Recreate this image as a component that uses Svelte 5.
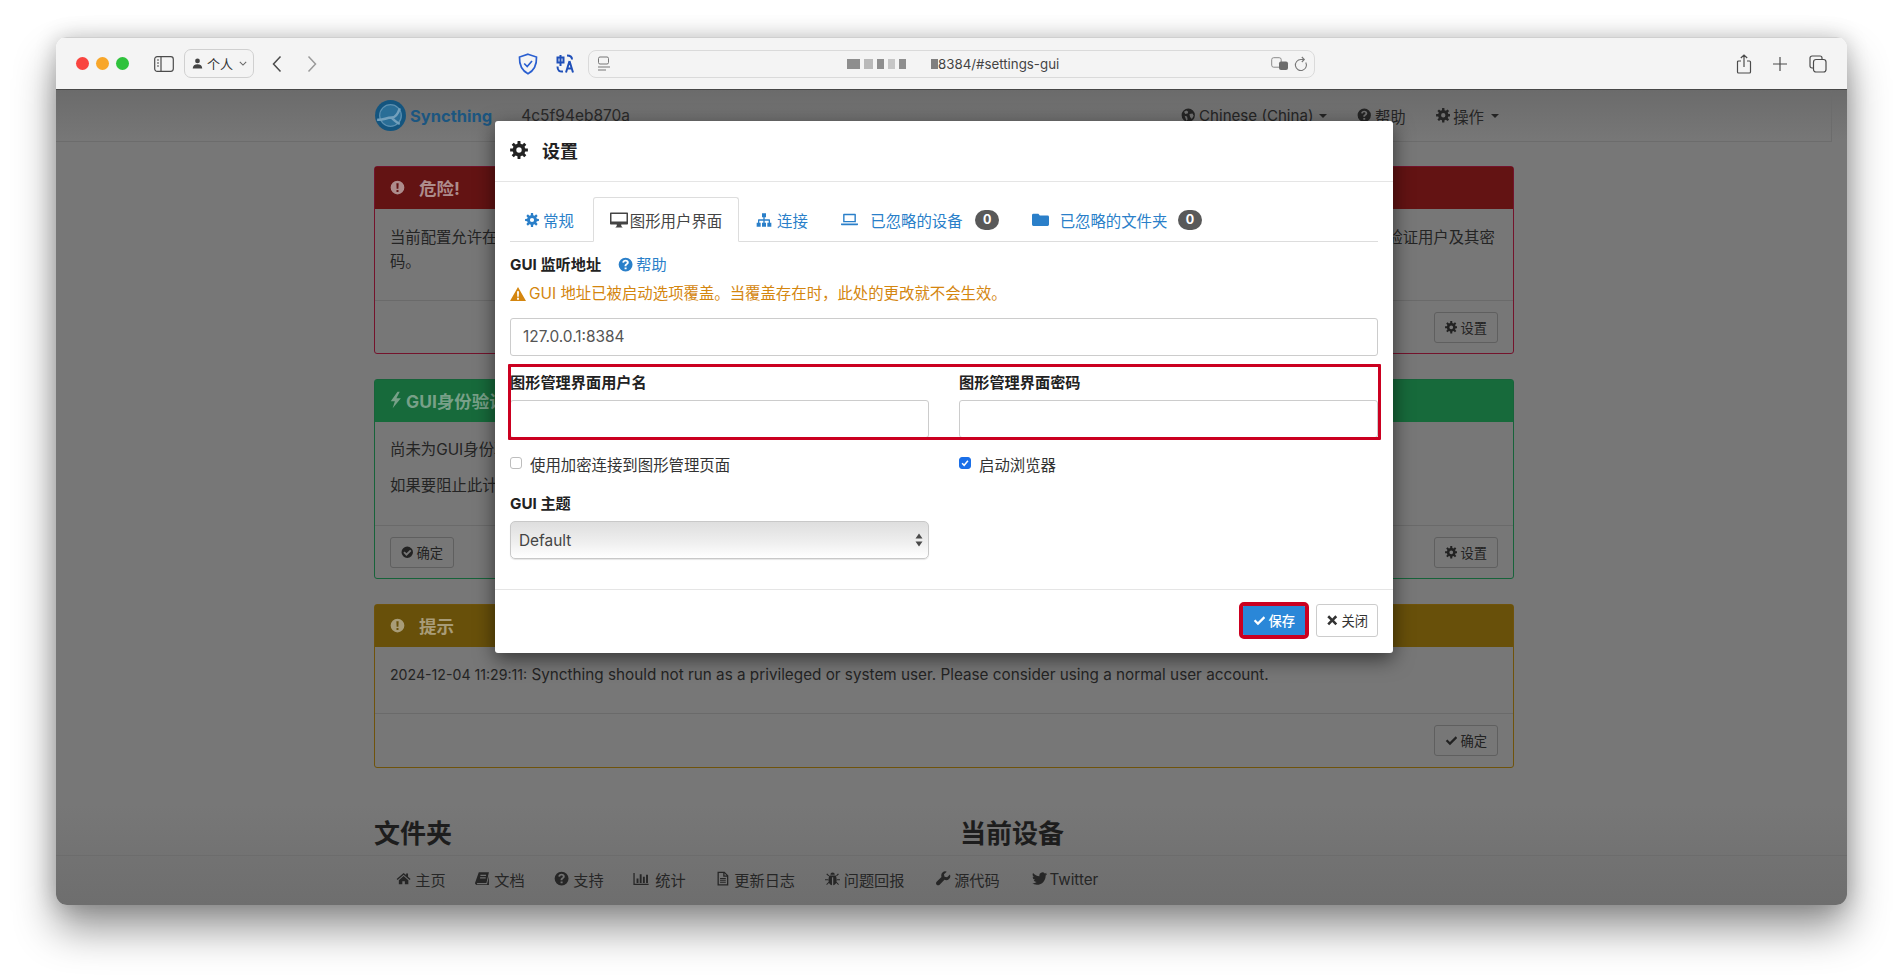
<script>
  function gear(teeth = 8, R = 12, r = 8.6, hole = 3.6) {
    const pts = [];
    const step = (Math.PI * 2) / teeth;
    for (let i = 0; i < teeth; i++) {
      const a = i * step - Math.PI / 2;
      const w = step * 0.2;
      const v = step * 0.31;
      const p = (rad, ang) => `${(12 + rad * Math.cos(ang)).toFixed(2)} ${(12 + rad * Math.sin(ang)).toFixed(2)}`;
      pts.push(p(r, a - v), p(R, a - w), p(R, a + w), p(r, a + v));
    }
    return `M${pts.join('L')}zM${12 - hole} 12a${hole} ${hole} 0 1 0 ${hole * 2} 0a${hole} ${hole} 0 1 0 ${-hole * 2} 0z`;
  }

  const icons = {
    cog: gear(),
    check: 'M20.5 4.5 9.5 15.5 4.5 10.5 1.5 13.5 9.5 21.5 23.5 7.5z',
    times: 'M6 2.5 12 8.5 18 2.5 21.5 6 15.5 12 21.5 18 18 21.5 12 15.5 6 21.5 2.5 18 8.5 12 2.5 6z',
    desktop: 'M1 2h22a1 1 0 0 1 1 1v14a1 1 0 0 1-1 1h-8v2l2 2H7l2-2v-2H1a1 1 0 0 1-1-1V3a1 1 0 0 1 1-1zM2 4v10h20V4z',
    sitemap: 'M9 2h6v6h-2v3h7a1 1 0 0 1 1 1v4h2v6h-6v-6h2v-3h-6v3h2v6H9v-6h2v-3H5v3h2v6H1v-6h2v-4a1 1 0 0 1 1-1h7V8H9z',
    laptop: 'M4 4h16a1 1 0 0 1 1 1v11H3V5a1 1 0 0 1 1-1zM5 6v8h14V6zM0 17.5h24V19a1 1 0 0 1-1 1H1a1 1 0 0 1-1-1z',
    folder: 'M2 4h7l2 2.5h11a2 2 0 0 1 2 2V19a2 2 0 0 1-2 2H2a2 2 0 0 1-2-2V6a2 2 0 0 1 2-2z',
    warn: 'M12 1.5 24 22.5H0zM10.5 8l.4 8h2.2l.4-8zM10.6 17.5v3h2.8v-3z',
    excl: 'M12 1a11 11 0 1 0 0 22 11 11 0 0 0 0-22zM10.2 5h3.6l-.4 9h-2.8zM10.4 16h3.2v3.2h-3.2z',
    question: 'M12 1a11 11 0 1 0 0 22A11 11 0 0 0 12 1zM10.4 16.5h3.2v3h-3.2zM12 4.5c-3 0-4.8 1.6-5.2 4l2.8.7c.3-1.3 1-2 2.3-2 1.2 0 2 .6 2 1.5 0 .8-.5 1.3-1.6 2-1.4.9-1.9 1.8-1.9 3.3v.5h3v-.3c0-.8.3-1.2 1.3-1.9 1.5-1 2.3-2 2.3-3.7 0-2.4-2-4.1-5-4.1z',
    checkc: 'M12 1a11 11 0 1 0 0 22 11 11 0 0 0 0-22zM17.5 7 10.5 14l-3.5-3.5-2.5 2.5 6 6 9.5-9.5z',
    bolt: 'M14 1 5 13.5h5.5L7.5 23l11-13.5h-6L17 1z',
    globe: 'M12 1a11 11 0 1 0 0 22 11 11 0 0 0 0-22zM5 6l4-2 3 2-1 3-4 1zM14 10l5-1 2 4-3 5-3-3zM6 13l4 1 1 5-2 2z',
    home: 'M12 3 1 12.5l1.5 1.6L12 6l9.5 8.1 1.5-1.6L19 9V4h-3v2.4zM12 8l-7.5 6.5V21H10v-5h4v5h5.5v-6.5z',
    book: 'M6 2h16l-4 17H4c-.8 0-1 .6-1 1s.4 1 1 1h15l3-13v14H3c-1.7 0-3-1.3-3-3zM8.5 6v2h9V6zM8 10v2h9v-2z',
    bars: 'M0 3h2v17h22v2H0zM5 12h3v7H5zM10 5h3v14h-3zM15 9h3v10h-3zM20 6h3v13h-3z',
    file: 'M4 1h11l6 6v16H4zM6 3v18h13V9h-6V3zM15 3.5V7h3.5zM8 11h9v1.5H8zM8 14h9v1.5H8zM8 17h9v1.5H8z',
    bug: 'M8.5 6a3.5 3.5 0 0 1 7 0zM7 7h10c1 2 1.5 5 1.5 8 0 4-2.5 7-5.5 7.5V10h-2v12.5C8 22 5.5 19 5.5 15c0-3 .5-6 1.5-8zM2 5l1.5-1 3 3-1 1.2zM22 5l-1.5-1-3 3 1 1.2zM0 13h5v1.6H0zM24 13h-5v1.6h5zM2 21l3.5-3.5 1 1.2-3.5 3.3zM22 21l-3.5-3.5-1 1.2 3.5 3.3z',
    wrench: 'M22 5.5l-4.5 4.5-4-1-1-4L17 1a6.5 6.5 0 0 0-8.3 8.3L1 17c-1.3 1.3-1.3 3.3 0 4.7s3.4 1.3 4.7 0l7.7-7.7A6.5 6.5 0 0 0 22 5.5z',
    twitter: 'M23.953 4.57a10 10 0 01-2.825.775 4.958 4.958 0 002.163-2.723c-.951.555-2.005.959-3.127 1.184a4.92 4.92 0 00-8.384 4.482C7.69 8.095 4.067 6.13 1.64 3.162a4.822 4.822 0 00-.666 2.475c0 1.71.87 3.213 2.188 4.096a4.904 4.904 0 01-2.228-.616v.06a4.923 4.923 0 003.946 4.827 4.996 4.996 0 01-2.212.085 4.936 4.936 0 004.604 3.417 9.867 9.867 0 01-6.102 2.105c-.39 0-.779-.023-1.17-.067a13.995 13.995 0 007.557 2.209c9.053 0 13.998-7.496 13.998-13.985 0-.21 0-.42-.015-.63A9.935 9.935 0 0024 4.59z'
  };

  const footerLinks = [
    ['home', '主页'], ['book', '文档'], ['question', '支持'], ['bars', '统计'],
    ['file', '更新日志'], ['bug', '问题回报'], ['wrench', '源代码'], ['twitter', 'Twitter']
  ];
  const blurBlocks = [
    [13, '#8e8e8e'], [9, '#b9b9b9'], [7, '#8e8e8e'], [7, '#c6c6c6'], [7, '#8e8e8e']
  ];
</script>

{#snippet icon(name)}
  <svg class="i" viewBox="0 0 24 24" aria-hidden="true"><path fill-rule="evenodd" d={icons[name]} /></svg>
{/snippet}

<div class="desk">
<div class="window">
  <header class="toolbar">
    <div class="lights"><span class="red"></span><span class="amber"></span><span class="green"></span></div>
    <svg class="t-ico sidebar" viewBox="0 0 20 16"><rect x=".7" y=".7" width="18.6" height="14.6" rx="2.5" /><path d="M7 .7v14.6M3 4h2M3 7h2M3 10h2" /></svg>
    <div class="profile">
      <svg class="person" viewBox="0 0 12 12"><circle cx="6" cy="3.2" r="2.6" /><path d="M.8 11.5c0-3 2.2-4.6 5.2-4.6s5.200 1.600 5.200 4.600z" /></svg>
      <span>个人</span>
      <svg class="chev" viewBox="0 0 10 6"><path d="M1 1l4 4 4-4" /></svg>
    </div>
    <svg class="t-ico back" viewBox="0 0 10 18"><path d="M8.500 1.500 1.500 9l7 7.500" /></svg>
    <svg class="t-ico fwd" viewBox="0 0 10 18"><path d="M1.500 1.500 8.500 9l-7 7.500" /></svg>
    <svg class="shield" viewBox="0 0 20 22"><path d="M10 1.200 18.500 4c.3 7-1.500 13-8.500 16.800C3 17 1.200 11 1.500 4z" /><path d="M6.200 10.500l3 3 4.800-5.500" /></svg>
    <div class="translate">
      <svg viewBox="0 0 18 20"><path d="M1.500 3.500h6v5h-6zM4.500 1v11M11 1.500c3 0 5 1 5 4M1.500 12.500c0 4 2 5.500 5.500 5M13.500 7 10 18.500M13.500 7 17 18.500M11 14.500h5" /></svg>
    </div>
    <div class="urlbar">
      <svg class="site" viewBox="0 0 14 16"><rect x="1.500" y="1" width="10" height="7" rx="1.500" /><path d="M1 11h12M1 14h8" /></svg>
      <div class="url">
        {#each blurBlocks as [w, c]}<i class="blk" style="width:{w}px;background:{c}"></i>{/each}
        <i class="blk last"></i><span>8384/#settings-gui</span>
      </div>
      <svg class="trans2" viewBox="0 0 18 14"><rect x=".7" y=".7" width="9.500" height="9.500" rx="2" /><rect class="solid" x="8" y="4.500" width="9" height="8.500" rx="2" /></svg>
      <svg class="reload" viewBox="0 0 14 16"><path d="M11.800 6.500a5.500 5.500 0 1 1-5-3H10M7.800 1 10.300 3.500 7.800 6" /></svg>
    </div>
    <svg class="t-ico share" viewBox="0 0 16 20"><path d="M5 7H2.500a1 1 0 0 0-1 1v10a1 1 0 0 0 1 1h11a1 1 0 0 0 1-1V8a1 1 0 0 0-1-1H11M8 13V1M4.800 4 8 1l3.200 3" /></svg>
    <svg class="t-ico plus" viewBox="0 0 14 14"><path d="M7 0v14M0 7h14" /></svg>
    <svg class="t-ico tabs-ico" viewBox="0 0 18 18"><rect x="4.500" y="4.500" width="12.500" height="12.500" rx="2.500" /><path d="M4.500 13H3a2 2 0 0 1-2-2V3a2 2 0 0 1 2-2h8a2 2 0 0 1 2 2v1.500" /></svg>
  </header>

  <div class="page">
    <div class="main">
      <nav class="topnav">
        <div class="brand">
          <svg class="logo" viewBox="0 0 32 32">
            <circle cx="16" cy="16" r="15" fill="#14557f" />
            <circle cx="16" cy="16" r="10.500" fill="#2a6e97" stroke="#5b8fb0" stroke-width="1.200" />
            <path d="M3 20c5 1 9-2 14-2 4 0 6-3 8-9M17 18c2 2 5 5 8 6" fill="none" stroke="#73a0bc" stroke-width="2.400" />
          </svg>
          <span>Syncthing</span>
        </div>
        <span class="device">4c5f94eb870a</span>
        <ul class="navright">
          <li>{@render icon('globe')}<span class="lang">Chinese (China)</span><b class="caret"></b></li>
          <li>{@render icon('question')}帮助</li>
          <li>{@render icon('cog')}操作<b class="caret"></b></li>
        </ul>
      </nav>

      <div class="container">
        <section class="panel danger">
          <div class="ph">{@render icon('excl')}<span>危险!</span></div>
          <div class="pb"><p>当前配置允许在没有验证的情况下公开访问图形管理界面。如果您希望保护此设备，并尽快限制外部网络的访问权限，请在设置中添加图形管理界面验证用户及其密<br />码。</p></div>
          <div class="pf end"><span class="btn">{@render icon('cog')}设置</span></div>
        </section>
        <section class="panel success">
          <div class="ph tight">{@render icon('bolt')}<span>GUI身份验证</span></div>
          <div class="pb"><p>尚未为GUI身份验证设置用户和密码。</p><p>如果要阻止此计算机上的其他用户访问，请设置。</p></div>
          <div class="pf"><span class="btn">{@render icon('checkc')}确定</span><span class="btn">{@render icon('cog')}设置</span></div>
        </section>
        <section class="panel warning">
          <div class="ph">{@render icon('excl')}<span>提示</span></div>
          <div class="pb"><p><span class="stamp">2024-12-04 11:29:11:</span> Syncthing should not run as a privileged or system user. Please consider using a normal user account.</p></div>
          <div class="pf end"><span class="btn">{@render icon('check')}确定</span></div>
        </section>
        <div class="heads"><h2>文件夹</h2><h2>当前设备</h2></div>
      </div>
    </div>

    <footer class="bottomnav">
      {#each footerLinks as [ic, label]}<span>{@render icon(ic)}{label}</span>{/each}
    </footer>

    <div class="modal">
      <div class="m-head">{@render icon('cog')}<span>设置</span></div>
      <div class="m-body">
        <ul class="tabs">
          <li>{@render icon('cog')}常规</li>
          <li class="active">{@render icon('desktop')}图形用户界面</li>
          <li>{@render icon('sitemap')}连接</li>
          <li class="wide">{@render icon('laptop')}已忽略的设备<b class="badge">0</b></li>
          <li class="wide">{@render icon('folder')}已忽略的文件夹<b class="badge">0</b></li>
        </ul>
        <div class="lbl first">GUI 监听地址<a class="help">{@render icon('question')}帮助</a></div>
        <div class="warnline">{@render icon('warn')}GUI 地址已被启动选项覆盖。当覆盖存在时，此处的更改就不会生效。</div>
        <div class="input addr">127.0.0.1:8384</div>
        <div class="cols creds">
          <div><div class="lbl">图形管理界面用户名</div><div class="input"></div></div>
          <div><div class="lbl">图形管理界面密码</div><div class="input"></div></div>
        </div>
        <div class="cols checks">
          <label><i class="cb"></i>使用加密连接到图形管理页面</label>
          <label><i class="cb on"><svg viewBox="0 0 12 12"><path d="M2.500 6.300 5 8.800 9.500 3.300" /></svg></i>启动浏览器</label>
        </div>
        <div class="lbl theme">GUI 主题</div>
        <div class="cols">
          <div class="select">Default
            <svg viewBox="0 0 8 14"><path d="M4 .5 7.500 5.500H.5zM4 13.500 .5 8.500h7z" /></svg>
          </div>
        </div>
      </div>
      <div class="m-foot">
        <span class="btn primary">{@render icon('check')}保存</span>
        <span class="btn plain">{@render icon('times')}关闭</span>
      </div>
      <div class="mark"></div>
    </div>
  </div>
</div>
</div>

<style>
  :global(body) {
    margin: 0;
    background: #fff;
  }
  .desk {
    height: 980px;
    box-sizing: border-box;
    padding: 37px 0 0 56px;
    background: #fff;
    overflow: hidden;
  }
  .window {
    width: 1791px;
    height: 868px;
    border-radius: 11px;
    overflow: hidden;
    box-shadow: 0 24px 42px rgba(0, 0, 0, 0.42), 0 0 22px rgba(0, 0, 0, 0.2);
    display: flex;
    flex-direction: column;
    font-family: Inter, "Noto Sans CJK SC", sans-serif;
    font-size: 15.4px;
    color: #242424;
    position: relative;
  }
  .i {
    width: 1em;
    height: 1em;
    fill: currentColor;
    flex: none;
  }

  /* browser chrome */
  .toolbar {
    height: 51px;
    flex: none;
    display: flex;
    align-items: center;
    background: #f4f4f4;
    border-top: 1px solid #cfcfcf;
    border-bottom: 1px solid #474747;
    box-sizing: content-box;
    color: #444;
  }
  .lights {
    display: flex;
    gap: 7px;
    margin-left: 20px;
  }
  .lights span {
    width: 13px;
    height: 13px;
    border-radius: 50%;
  }
  .red { background: #f9443f; }
  .amber { background: #f8a629; }
  .green { background: #2fc23c; }
  .t-ico {
    fill: none;
    stroke: #4b4b4b;
    stroke-width: 1.2;
    flex: none;
  }
  .sidebar { width: 20px; height: 16px; margin-left: 25px; }
  .profile {
    width: 70px;
    height: 29px;
    margin-left: 10px;
    box-sizing: border-box;
    border: 1px solid #d0d0d0;
    border-radius: 7px;
    display: flex;
    align-items: center;
    padding-left: 7px;
    gap: 4px;
    font-size: 13px;
    color: #333;
  }
  .person { width: 11px; height: 11px; fill: #444; }
  .chev { width: 8px; height: 5px; fill: none; stroke: #666; stroke-width: 1.300; margin-left: 2px; }
  .back { width: 10px; height: 18px; margin-left: 18px; stroke-width: 1.500; }
  .fwd { width: 10px; height: 18px; margin-left: 25px; stroke: #9a9a9a; stroke-width: 1.500; }
  .shield { width: 20px; height: 22px; margin-left: 201px; fill: none; stroke: #2a5fd0; stroke-width: 1.700; flex: none; }
  .translate { margin-left: 18px; display: flex; }
  .translate svg { width: 18px; height: 20px; fill: none; stroke: #1f4fb8; stroke-width: 2; }
  .urlbar {
    width: 727px;
    height: 28px;
    margin-left: 14px;
    box-sizing: border-box;
    border: 1px solid #dadada;
    border-radius: 8px;
    display: flex;
    align-items: center;
    padding: 0 6px 0 8px;
    color: #444;
    font-size: 13.300px;
  }
  .site { width: 14px; height: 16px; fill: none; stroke: #777; stroke-width: 1; flex: none; }
  .url {
    display: flex;
    align-items: center;
    margin-left: 236px;
    flex: 1;
  }
  .blk { height: 10px; margin-right: 4px; display: block; }
  .blk.last { width: 7px; background: #7f7f7f; margin: 0 0 0 21px; }
  .trans2 { width: 18px; height: 14px; fill: none; stroke: #8a8a8a; flex: none; }
  .trans2 .solid { fill: #6c6c6c; stroke: none; }
  .reload { width: 14px; height: 16px; margin-left: 5px; fill: none; stroke: #777; stroke-width: 1.100; flex: none; }
  .share { width: 16px; height: 20px; margin-left: 421px; }
  .plus { width: 14px; height: 14px; margin-left: 21px; }
  .tabs-ico { width: 18px; height: 18px; margin-left: 22px; }

  /* page */
  .page {
    flex: 1;
    min-height: 0;
    position: relative;
    display: flex;
    flex-direction: column;
    background: linear-gradient(#6b6b6b, #777 50px, #777 calc(100% - 100px), #6e6e6e);
  }
  .main {
    flex: 1;
    min-height: 0;
    overflow: hidden;
    padding-right: 15px;
  }
  .topnav {
    height: 51px;
    display: flex;
    align-items: center;
    padding: 0 332px 0 318px;
    border-bottom: 1px solid #6c6c6c;
    border-right: 1px solid #6c6c6c;
    position: relative;
  }
  .brand {
    display: flex;
    align-items: center;
    gap: 3px;
    color: #1c5680;
    font-weight: 700;
    font-size: 16.500px;
  }
  .logo { width: 33px; height: 33px; }
  .device { margin-left: 29px; font-size: 15.500px; color: #2a2a2a; }
  .navright {
    list-style: none;
    margin: 0 0 0 auto;
    padding: 0;
    display: flex;
    gap: 30px;
  }
  .navright li { display: flex; align-items: center; gap: 3px; color: #252525; }
  .navright .i { font-size: 14.500px; }
  .lang { font-size: 15.100px; margin-left: 1px; }
  .navright li:first-child { margin-left: 0; }
  .caret {
    width: 0;
    height: 0;
    border-left: 4px solid transparent;
    border-right: 4px solid transparent;
    border-top: 4px solid #242424;
    margin-left: 4px;
  }
  .lang + .caret { margin-left: 3px; }
  .container { width: 1140px; margin: 24px auto 0; }
  .panel {
    border: 1px solid;
    border-radius: 3px;
    margin-bottom: 25px;
    box-sizing: border-box;
  }
  .danger { border-color: #74132c; height: 188px; }
  .success { border-color: #17633a; height: 200px; }
  .warning { border-color: #6f530b; height: 164px; }
  .ph {
    height: 42px;
    box-sizing: border-box;
    padding: 0 15px 2px;
    display: flex;
    align-items: center;
    gap: 14px;
    font-weight: 700;
    font-size: 17.500px;
  }
  .ph .i { font-size: 15px; }
  .ph.tight { gap: 1px; }
  .ph.tight .i { font-size: 18px; margin-left: -3px; }
  .danger .ph { background: #631313; color: #ad8c8c; }
  .success .ph { background: #176a3b; color: #78a088; }
  .warning .ph { background: #68500a; color: #a89c78; }
  .pb {
    padding: 15px 15px 0;
    border-top: 1px solid transparent;
    white-space: nowrap;
    box-sizing: border-box;
    line-height: 24px;
  }
  .danger .pb { height: 91px; font-size: 15.350px; padding-top: 16px; }
  .success .pb { height: 103px; }
  .warning .pb { height: 66px; font-size: 15.270px; }
  .pb p { margin: 0 0 12px; }
  .stamp { font-size: 14.150px; }
  .pf {
    height: 53px;
    box-sizing: border-box;
    border-top: 1px solid #6a6a6a;
    padding: 11px 15px 0;
    display: flex;
    justify-content: space-between;
    align-items: flex-start;
  }
  .pf.end { justify-content: flex-end; }
  .btn {
    height: 31px;
    width: 64px;
    box-sizing: border-box;
    border: 1px solid #5f5f5f;
    border-radius: 3px;
    display: inline-flex;
    align-items: center;
    justify-content: center;
    gap: 3px;
    font-size: 13.300px;
    color: #222;
  }
  .btn .i { font-size: 12.500px; }
  .heads {
    display: grid;
    grid-template-columns: 1fr 1fr;
    column-gap: 32px;
    margin-top: 48px;
  }
  .heads h2 { margin: 0; font-size: 26px; font-weight: 700; line-height: 36px; color: #1d1d1d; }
  .bottomnav {
    height: 50px;
    flex: none;
    box-sizing: border-box;
    border-top: 1px solid #6c6c6c;
    display: flex;
    align-items: center;
    padding: 0 0 3px 340px;
    gap: 29.500px;
    font-size: 15.200px;
    color: #262626;
  }
  .bottomnav span { display: flex; align-items: center; gap: 4px; }
  .bottomnav span:nth-child(4) { margin-left: -2px; }
  .bottomnav span:nth-child(4) .i { width: 20px; }
  .bottomnav span:nth-child(7) { margin-left: 2px; gap: 3px; }
  .bottomnav span:nth-child(8) { margin-left: 3px; gap: 2px; }

  /* modal */
  .modal {
    position: absolute;
    left: 439px;
    top: 31px;
    width: 898px;
    height: 532px;
    background: #fff;
    border-radius: 3px;
    box-shadow: 0 6px 20px rgba(0, 0, 0, 0.55);
    color: #333;
    display: flex;
    flex-direction: column;
  }
  .m-head {
    height: 60px;
    flex: none;
    box-sizing: content-box;
    border-bottom: 1px solid #e5e5e5;
    display: flex;
    align-items: center;
    gap: 14px;
    padding-left: 15px;
    font-size: 18px;
    font-weight: 700;
    color: #222;
  }
  .m-head span { margin-top: -2px; }
  .m-head .i { font-size: 18px; margin-top: -2px; }
  .m-body { flex: 1; padding: 15px 15px 0; }
  .tabs {
    list-style: none;
    margin: 0;
    padding: 0 0 0 15px;
    height: 45px;
    box-sizing: border-box;
    display: flex;
    border-bottom: 1px solid #ddd;
    color: #2a7fc9;
    font-size: 15.400px;
  }
  .tabs li { display: flex; align-items: center; height: 45px; box-sizing: border-box; }
  .tabs li:first-child { gap: 4px; width: 68px; }
  .tabs li .i { font-size: 14px; }
  .tabs .active {
    width: 146px;
    justify-content: center;
    gap: 2px;
    color: #444;
    background: #fff;
    border: 1px solid #ddd;
    border-bottom-color: #fff;
    border-radius: 3px 3px 0 0;
    margin-right: 17px;
  }
  .tabs .active .i { font-size: 18px; }
  .tabs li:nth-child(3) { gap: 5px; margin-right: 33px; }
  .tabs li:nth-child(3) .i { font-size: 16px; }
  .tabs .wide { gap: 12.500px; margin-right: 33px; }
  .tabs .wide:last-child { gap: 10.500px; }
  .tabs .wide .i { font-size: 17px; }
  .badge {
    display: block;
    width: 24px;
    height: 20px;
    border-radius: 10px;
    background: #595959;
    color: #fff;
    font-size: 12.500px;
    line-height: 20px;
    text-align: center;
  }
  .lbl { font-weight: 700; font-size: 15.200px; color: #222; line-height: 20px; }
  .lbl.first { margin-top: 13px; display: flex; align-items: center; }
  .help { color: #2a7fc9; font-weight: 400; margin-left: 17px; display: flex; align-items: center; gap: 3px; }
  .warnline {
    color: #d4860f;
    margin-top: 9px;
    line-height: 20px;
    display: flex;
    align-items: center;
    gap: 3px;
  }
  .warnline .i { font-size: 16px; }
  .input {
    height: 38px;
    box-sizing: border-box;
    border: 1px solid #ccc;
    border-radius: 3px;
    padding: 0 12px;
    line-height: 36px;
    color: #555;
    background: #fff;
  }
  .addr { margin-top: 14px; }
  .cols {
    display: grid;
    grid-template-columns: 419px 419px;
    column-gap: 30px;
  }
  .creds { margin-top: 17px; }
  .creds .lbl { margin-bottom: 7px; }
  .checks { margin-top: 16px; }
  .checks label { display: flex; align-items: center; gap: 8px; height: 20px; color: #333; }
  .cb {
    width: 12px;
    height: 12px;
    box-sizing: border-box;
    border: 1px solid #bdbdbd;
    border-radius: 3px;
    display: block;
    margin-top: -3px;
  }
  .cb.on { background: #1a6fe8; border-color: #1a6fe8; }
  .cb.on svg { display: block; width: 10px; height: 10px; fill: none; stroke: #fff; stroke-width: 1.800; }
  .lbl.theme { margin-top: 20px; margin-bottom: 7px; }
  .select {
    height: 38px;
    box-sizing: border-box;
    border: 1px solid #c8c8c8;
    border-radius: 5px;
    background: linear-gradient(#dedede, #f0f0f0 60%, #fff);
    box-shadow: 0 1px 1px rgba(0, 0, 0, 0.1);
    display: flex;
    align-items: center;
    justify-content: space-between;
    padding: 0 5px 0 8px;
    color: #444;
  }
  .select svg { width: 8px; height: 14px; fill: #4a4a4a; }
  .m-foot {
    height: 64px;
    flex: none;
    box-sizing: border-box;
    border-top: 1px solid #e5e5e5;
    display: flex;
    justify-content: flex-end;
    align-items: center;
    gap: 11px;
    padding: 0 15px 2px;
  }
  .btn.primary {
    width: 62px;
    height: 29px;
    background: #2a87d8;
    border: none;
    color: #fff;
    outline: 4px solid #cb0020;
    border-radius: 1px;
    font-weight: 500;
  }
  .btn.plain { width: 62px; height: 33px; border-color: #ccc; color: #333; background: #fff; }
  .mark {
    position: absolute;
    left: 13px;
    top: 243px;
    width: 873px;
    height: 76px;
    box-sizing: border-box;
    border: 3px solid #cb0020;
    border-radius: 1px;
  }
</style>
